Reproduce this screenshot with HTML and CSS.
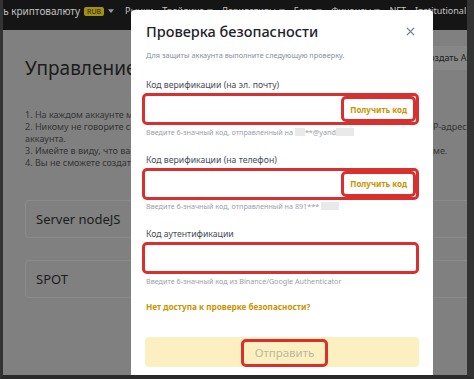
FILE: index.html
```html
<!DOCTYPE html>
<html lang="ru">
<head>
<meta charset="utf-8">
<title>Проверка безопасности</title>
<link rel="stylesheet" href="styles.css">
</head>
<body>
<div class="screen">
  <nav class="nav">
    <span class="nav-item first">Купить криптовалюту <span class="badge">RUB</span><svg class="caret" viewBox="0 0 8 5"><path d="M0 0h8L4 5z"/></svg></span>
    <span class="nav-item">Рынки</span>
    <span class="nav-item">Трейдинг<svg class="caret" viewBox="0 0 8 5"><path d="M0 0h8L4 5z"/></svg></span>
    <span class="nav-item">Деривативы<svg class="caret" viewBox="0 0 8 5"><path d="M0 0h8L4 5z"/></svg></span>
    <span class="nav-item">Earn<svg class="caret" viewBox="0 0 8 5"><path d="M0 0h8L4 5z"/></svg></span>
    <span class="nav-item">Финансы<svg class="caret" viewBox="0 0 8 5"><path d="M0 0h8L4 5z"/></svg></span>
    <span class="nav-item">NFT</span>
    <span class="nav-item">Institutional</span>
  </nav>

  <main class="page">
    <div class="page-head">
      <h1 class="page-title">Управление API</h1>
      <span class="btn-create">Создать API</span>
    </div>
    <div class="rules">
      <div class="rule"><span class="rule-a">1. На каждом аккаунте можно создать до 30 API-ключей.</span></div>
      <div class="rule"><span class="rule-a">2. Никому не говорите свой API-ключ. Рекомендуем привязать I</span><span class="rule-b">P-адрес к API для защиты</span></div>
      <div class="rule"><span class="rule-a">аккаунта.</span></div>
      <div class="rule"><span class="rule-a">3. Имейте в виду, что ваш API-ключ виден сторонней платфор</span><span class="rule-b">ме.</span></div>
      <div class="rule"><span class="rule-a">4. Вы не сможете создать API без верификации.</span></div>
    </div>
    <section class="card">Server nodeJS</section>
    <section class="card">SPOT</section>
  </main>

  <div class="modal">
    <div class="modal-head">
      <h2 class="modal-title">Проверка безопасности</h2>
      <svg class="close" viewBox="0 0 10 10"><path d="M1 1l8 8M9 1l-8 8"/></svg>
    </div>
    <p class="subtitle">Для защиты аккаунта выполните следующую проверку.</p>

    <div class="field">
      <div class="label">Код верификации (на эл. почту)</div>
      <div class="input"><span class="get-code">Получить код</span></div>
      <div class="helper">Введите 6-значный код, отправленный на <span class="mask m1"></span>**@yand<span class="mask m2"></span></div>
    </div>

    <div class="field">
      <div class="label">Код верификации (на телефон)</div>
      <div class="input"><span class="get-code">Получить код</span></div>
      <div class="helper">Введите 6-значный код, отправленный на 891*** <span class="mask m3"></span></div>
    </div>

    <div class="field">
      <div class="label">Код аутентификации</div>
      <div class="input"></div>
      <div class="helper">Введите 6-значный код из Binance/Google Authenticator</div>
    </div>

    <div class="link">Нет доступа к проверке безопасности?</div>

    <div class="submit"><span class="submit-mark">Отправить</span></div>
  </div>
</div>
</body>
</html>
```

FILE: styles.css
```css
html, body {
  margin: 0;
  padding: 0;
}

body {
  width: 474px;
  height: 379px;
  overflow: hidden;
  background: #2e2e2e;
  font-family: "Noto Sans", "Open Sans", sans-serif;
}

.screen {
  position: relative;
  box-sizing: border-box;
  width: 474px;
  height: 379px;
  border-left: 3px solid #333333;
  border-right: 7px solid #333333;
  border-bottom: 4px solid #2a2a2a;
  background: #808080;
  overflow: hidden;
}

/* top navigation (dimmed) */
.nav {
  height: 30px;
  box-sizing: border-box;
  padding-top: 4px;
  background: #151515;
  display: flex;
  align-items: flex-start;
  gap: 9px;
  white-space: nowrap;
  font-size: 9px;
  line-height: 14px;
  color: #c2c2c2;
}

.nav-item {
  display: flex;
  align-items: center;
  gap: 2px;
  flex: none;
}

.nav-item.first {
  margin-left: -28px;
  font-size: 10px;
  gap: 3px;
  margin-right: 2px;
}

.badge {
  background: #a39115;
  color: #2a2606;
  font-size: 7px;
  line-height: 9px;
  padding: 0 3px;
  border-radius: 2px;
  margin-left: 1px;
}

.caret {
  width: 6px;
  height: 4px;
  fill: #9a9a9a;
  margin-left: 1px;
}

/* page behind overlay */
.page {
  width: 462px;
  padding-left: 22px;
}

.page-head {
  display: flex;
  align-items: flex-start;
  justify-content: space-between;
  padding-top: 16px;
}

.page-title {
  margin: 9px 0 0;
  font-size: 19px;
  line-height: 26px;
  font-weight: 400;
  color: #1c1c1c;
}

.btn-create {
  height: 24px;
  line-height: 24px;
  padding: 0 12px;
  border-radius: 4px;
  background: #878787;
  color: #1c1c1c;
  font-size: 9px;
}

.rules {
  margin-top: 28px;
  font-size: 9px;
  line-height: 12px;
  color: #353535;
}

.rule {
  display: flex;
  white-space: nowrap;
}

.rule-a {
  flex: none;
  width: 408px;
  overflow: hidden;
}

.card {
  margin-top: 31px;
  height: 38px;
  box-sizing: border-box;
  border: 1px solid #8a8a8a;
  border-radius: 4px;
  padding-left: 10px;
  display: flex;
  align-items: center;
  font-size: 13px;
  color: #1c1c1c;
}

.card + .card {
  margin-top: 22px;
}

/* modal */
.modal {
  position: absolute;
  left: 128px;
  top: 10px;
  width: 302px;
  height: 380px;
  box-sizing: border-box;
  padding: 11px 14px 0 11px;
  background: #ffffff;
  border-radius: 4px 4px 0 0;
}

.modal-head {
  display: flex;
  align-items: center;
  justify-content: space-between;
  padding-left: 4px;
}

.modal-title {
  margin: 0;
  font-size: 14.5px;
  line-height: 20px;
  font-weight: 500;
  color: #1e2329;
}

.close {
  width: 9px;
  height: 9px;
  margin-right: 4px;
  stroke: #707a8a;
  stroke-width: 1.4;
  fill: none;
}

.subtitle {
  margin: 8px 0 0;
  padding-left: 4px;
  font-size: 7.3px;
  line-height: 12px;
  color: #848e9c;
}

.field {
  margin-top: 18px;
}

.field + .field {
  margin-top: 16px;
}

.label {
  padding-left: 4px;
  font-size: 8.7px;
  line-height: 13px;
  color: #474d57;
}

.input {
  margin-top: 1px;
  height: 32px;
  box-sizing: border-box;
  border: 3px solid #d8302f;
  border-radius: 5px;
  display: flex;
  align-items: center;
  justify-content: flex-end;
}

.get-code {
  height: 26px;
  box-sizing: border-box;
  border: 3px solid #d8302f;
  border-radius: 5px;
  padding: 0 6px;
  display: flex;
  align-items: center;
  font-size: 8px;
  font-weight: 700;
  color: #c99400;
}

.helper {
  margin-top: 1.5px;
  padding-left: 4px;
  font-size: 7.2px;
  line-height: 11px;
  color: #9aa0aa;
  white-space: nowrap;
}

.mask {
  display: inline-block;
  height: 8px;
  vertical-align: -1px;
  background: #e9e9e9;
}

.m1 { width: 10px; }
.m2 { width: 18px; }
.m3 { width: 18px; }

.link {
  margin-top: 13.5px;
  padding-left: 4px;
  font-size: 8.2px;
  line-height: 13px;
  font-weight: 700;
  color: #c99400;
}

.submit {
  margin: 23.5px 0 0 3px;
  height: 30px;
  border-radius: 4px;
  background: #fcf0c0;
  display: flex;
  align-items: flex-end;
  justify-content: center;
}

.submit-mark {
  margin-left: 5px;
  width: 87px;
  height: 28px;
  box-sizing: border-box;
  border: 3px solid #d8302f;
  border-radius: 5px;
  display: flex;
  align-items: center;
  justify-content: center;
  font-size: 11.5px;
  color: #bcb7a2;
}
```
